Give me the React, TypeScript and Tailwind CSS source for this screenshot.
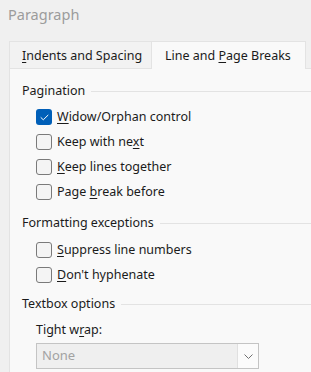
import React from "react";

const font = { fontFamily: '"Noto Sans", "Segoe UI", sans-serif' };

function U({ children }: { children: React.ReactNode }) {
  return <span className="underline underline-offset-[2px] decoration-[1px]">{children}</span>;
}

function Header({ children, pt, pb }: { children: React.ReactNode; pt: string; pb: string }) {
  return (
    <div className={`flex items-center h-[16px] ${pt} ${pb} box-content`}>
      <span className="text-[12.5px] leading-[16px] text-[#1b1b1b] whitespace-nowrap">{children}</span>
      <div className="flex-1 h-px bg-[#e3e3e3] ml-[6px]" />
    </div>
  );
}

function Check({ checked, children }: { checked?: boolean; children: React.ReactNode }) {
  return (
    <div className="pt-[4px] pb-[5px] pl-[14px]">
      <div className="flex items-center h-[16px]">
        {checked ? (
          <div className="w-[16px] h-[16px] rounded-[3px] bg-[#005fb8] flex items-center justify-center">
            <svg width="9" height="7" viewBox="0 0 9 7">
              <path d="M1 3.6 L3.3 5.8 L8 1.2" fill="none" stroke="white" strokeWidth="1" strokeLinecap="round" strokeLinejoin="round" />
            </svg>
          </div>
        ) : (
          <div className="w-[16px] h-[16px] rounded-[3px] border border-[#7a7a7a] bg-[#f4f4f4]" />
        )}
        <span className="ml-[5px] text-[12.5px] leading-[16px] text-[#1b1b1b] whitespace-nowrap">{children}</span>
      </div>
    </div>
  );
}

export default function App() {
  return (
    <div className="w-[311px] h-[372px] overflow-hidden bg-[#f0f0f0] relative" style={font}>
      <div className="h-[41px] pl-[8px] pt-[2px]">
        <span className="text-[14.5px] leading-[20px] text-[#9c9c9c]">Paragraph</span>
      </div>
      <div className="flex items-end">
        <div className="ml-[9px] w-[143px] h-[27px] border border-b-0 border-[#e3e3e3] bg-[#f2f2f2] pl-[12px] flex items-center pt-[2px]">
          <span className="text-[12.5px] leading-[16px] text-[#1b1b1b] whitespace-nowrap">
            <U>I</U>ndents and Spacing
          </span>
        </div>
        <div className="w-[154px] h-[28px] border border-b-0 border-l-0 border-[#e3e3e3] bg-[#f9f9f9] pl-[13px] flex items-center relative z-10 -mb-px">
          <span className="text-[12.5px] leading-[16px] text-[#1b1b1b] whitespace-nowrap">
            Line and <U>P</U>age Breaks
          </span>
        </div>
      </div>
      <div className="ml-[9px] w-[340px] h-[320px] border-t border-l border-[#e3e3e3] bg-[#f9f9f9] pl-[12px]">
        <Header pt="pt-[14px]" pb="pb-[6px]">Pagination</Header>
        <Check checked>
          <U>W</U>idow/Orphan control
        </Check>
        <Check>
          Keep with ne<U>x</U>t
        </Check>
        <Check>
          <U>K</U>eep lines together
        </Check>
        <Check>
          Page <U>b</U>reak before
        </Check>
        <Header pt="pt-[10px]" pb="pb-[7px]">Formatting exceptions</Header>
        <Check>
          <U>S</U>uppress line numbers
        </Check>
        <Check>
          <U>D</U>on't hyphenate
        </Check>
        <Header pt="pt-[8px]" pb="pb-[10px]">Textbox options</Header>
        <div className="pl-[14px]">
          <div className="h-[16px] text-[12.5px] leading-[16px] text-[#1b1b1b] whitespace-nowrap">
            Tight w<U>r</U>ap:
          </div>
          <div className="mt-[5px] w-[223px] h-[26px] border border-[#c4c4c4] bg-[#efefef] flex">
            <div className="flex-1 pl-[5px] flex items-center text-[13px] text-[#a2a2a2]">None</div>
            <div className="w-[21px] h-full bg-[#fbfbfb] border-l border-[#e0e0e0] flex items-center justify-center">
              <svg width="9" height="5" viewBox="0 0 9 5">
                <path d="M0.5 0.5 L4.5 4.5 L8.5 0.5" fill="none" stroke="#707070" strokeWidth="1" />
              </svg>
            </div>
          </div>
        </div>
      </div>
    </div>
  );
}
